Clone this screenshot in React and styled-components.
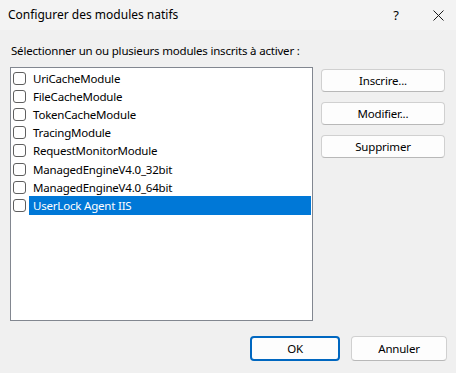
import React from 'react';
import styled, { createGlobalStyle } from 'styled-components';

const Global = createGlobalStyle`
  html, body {
    margin: 0;
    padding: 0;
    background: #f0f0f0;
  }
  body {
    font-family: "Noto Sans", "Open Sans", sans-serif;
    font-size: 11.5px;
    letter-spacing: -0.2px;
    color: #000;
  }
`;

const Dialog = styled.div`
  width: 456px;
  height: 373px;
  display: flex;
  flex-direction: column;
  background: #f0f0f0;
  overflow: hidden;
`;

const TitleBar = styled.div`
  height: 30px;
  display: flex;
  align-items: center;
  padding-left: 8px;
  background: #f3f3f3;
`;

const Title = styled.div`
  flex: 1;
  font-size: 12px;
  letter-spacing: 0;
  padding-bottom: 2px;
`;

const TitleButton = styled.div`
  width: ${({ w }) => w}px;
  height: 30px;
  display: flex;
  align-items: center;
  justify-content: center;
  font-size: 13px;
`;

const Body = styled.div`
  flex: 1;
  display: flex;
  flex-direction: column;
  padding: 0 10px;
`;

const Label = styled.div`
  height: 37px;
  display: flex;
  align-items: center;
  padding-top: 3px;
  box-sizing: border-box;
  padding-left: 1px;
`;

const Main = styled.div`
  display: flex;
  gap: 8px;
`;

const List = styled.div`
  width: 303px;
  height: 254px;
  box-sizing: border-box;
  border: 1px solid #828790;
  background: #fff;
  padding-top: 1px;
`;

const Row = styled.div`
  height: 18.2px;
  display: flex;
  align-items: center;
  padding-left: 2px;
`;

const Check = styled.span`
  width: 13px;
  height: 13px;
  box-sizing: border-box;
  border: 1px solid #5f5f5f;
  border-radius: 3px;
  background: #fff;
  flex: none;
`;

const ItemText = styled.span`
  flex: 1;
  height: 100%;
  display: flex;
  align-items: center;
  margin-left: 3px;
  margin-right: 1px;
  padding-left: 4px;
  background: ${({ selected }) => (selected ? '#0078d7' : 'transparent')};
  color: ${({ selected }) => (selected ? '#fff' : '#000')};
  white-space: nowrap;
`;

const Side = styled.div`
  display: flex;
  flex-direction: column;
  gap: 10px;
  padding-top: 2px;
`;

const Button = styled.button`
  width: ${({ w }) => w}px;
  height: ${({ h }) => h || 23}px;
  box-sizing: border-box;
  font-family: inherit;
  font-size: 11.5px;
  letter-spacing: -0.2px;
  color: #000;
  background: #fdfdfd;
  border: ${({ primary }) => (primary ? '2px solid #0067c0' : '1px solid #d0d0d0')};
  border-bottom-color: ${({ primary }) => (primary ? '#0067c0' : '#b8b8b8')};
  border-radius: 4px;
  padding: 0;
`;

const Footer = styled.div`
  display: flex;
  justify-content: flex-end;
  gap: 11px;
  padding-top: 15px;
  margin-right: -1px;
`;

const items = [
  'UriCacheModule',
  'FileCacheModule',
  'TokenCacheModule',
  'TracingModule',
  'RequestMonitorModule',
  'ManagedEngineV4.0_32bit',
  'ManagedEngineV4.0_64bit',
  'UserLock Agent IIS',
];

export default function App() {
  return (
    <Dialog>
      <Global />
      <TitleBar>
        <Title>Configurer des modules natifs</Title>
        <TitleButton w={48}>?</TitleButton>
        <TitleButton w={36}>
          <svg width="11" height="11" viewBox="0 0 11 11">
            <path d="M0.5 0.5L10.5 10.5M10.5 0.5L0.5 10.5" stroke="#1a1a1a" strokeWidth="1" />
          </svg>
        </TitleButton>
      </TitleBar>
      <Body>
        <Label>Sélectionner un ou plusieurs modules inscrits à activer :</Label>
        <Main>
          <List>
            {items.map((name, i) => (
              <Row key={name}>
                <Check />
                <ItemText selected={i === items.length - 1}>{name}</ItemText>
              </Row>
            ))}
          </List>
          <Side>
            <Button w={124}>Inscrire...</Button>
            <Button w={124}>Modifier...</Button>
            <Button w={124}>Supprimer</Button>
          </Side>
        </Main>
        <Footer>
          <Button w={90} h={25} primary>OK</Button>
          <Button w={96} h={25}>Annuler</Button>
        </Footer>
      </Body>
    </Dialog>
  );
}
